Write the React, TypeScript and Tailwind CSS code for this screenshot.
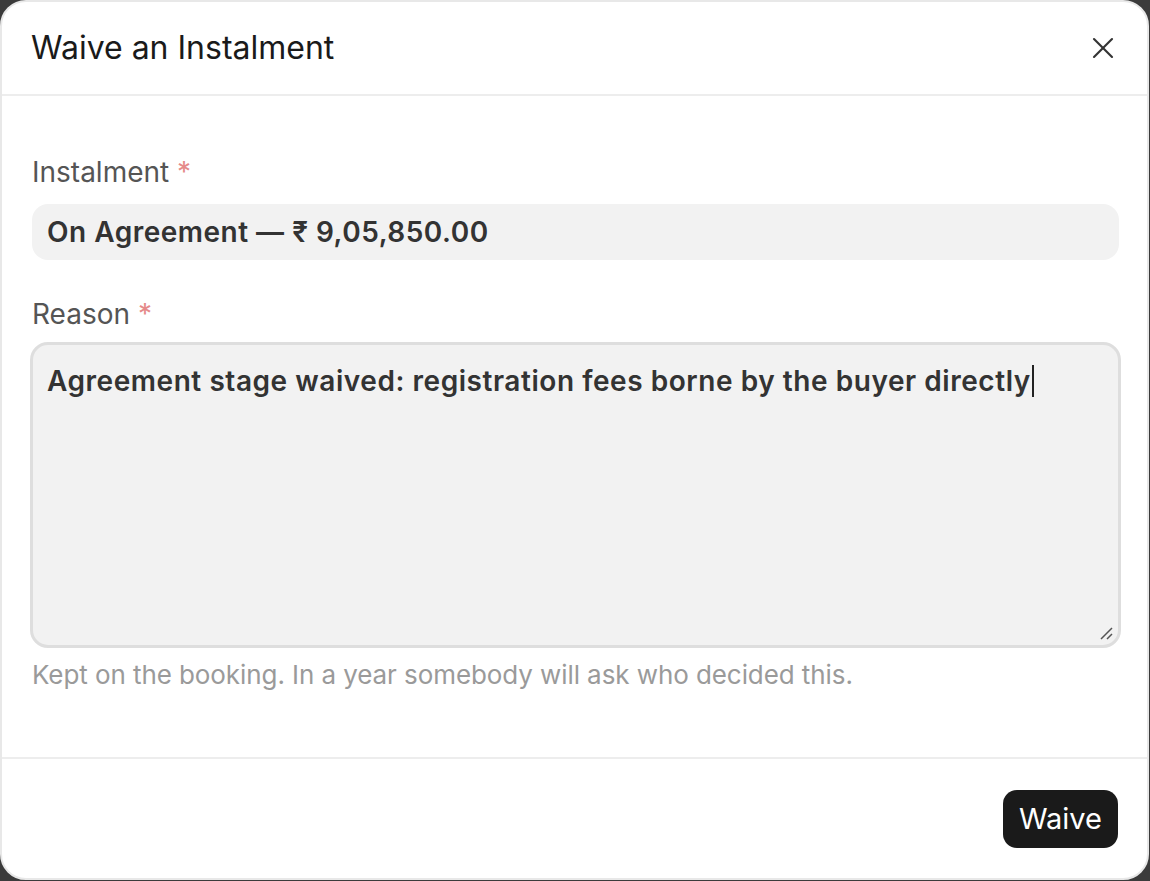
import * as React from "react"
import { X } from "lucide-react"

const font = { fontFamily: "Inter, 'Noto Sans', sans-serif" }

function Field({ label, children }: { label: string; children: React.ReactNode }) {
    return (
        <div className="flex flex-col">
            <label className="text-[28px] leading-[36px] text-[#555555]">
                {label} <span className="text-[#e58a8a]">*</span>
            </label>
            {children}
        </div>
    )
}

export default function App() {
    return (
        <div className="h-[881px] w-[1150px] bg-[#3b3b3b]" style={font}>
            <div className="flex h-[880px] w-[1149px] flex-col rounded-[26px] border-2 border-[#e8e8e8] bg-white">
                {/* header */}
                <div className="flex h-[94px] shrink-0 items-center justify-between border-b-2 border-[#ededed] pl-[29px] pr-[26px]">
                    <h2 className="text-[32px] font-normal text-[#1a1a1a]">Waive an Instalment</h2>
                    <button className="text-[#333333]">
                        <X className="h-[36px] w-[36px]" strokeWidth={1.4} />
                    </button>
                </div>

                {/* body */}
                <div className="flex flex-1 flex-col pl-[30px] pr-[28px] pt-[58px]">
                    <Field label="Instalment">
                        <div className="mt-[14px] flex h-[56px] items-center rounded-[16px] bg-[#f2f2f2] px-[15px] text-[28px] font-semibold tracking-[0.5px] text-[#333333]">
                            On Agreement — ₹ 9,05,850.00
                        </div>
                    </Field>

                    <div className="mt-[36px]">
                        <Field label="Reason">
                            <div className="relative -mx-[2px] mt-[10px] h-[306px] rounded-[18px] border-[3px] border-[#dedede] bg-[#f2f2f2] px-[14px] pt-[14px] text-[28px] font-semibold leading-[38px] tracking-[0.55px] text-[#333333]">
                                Agreement stage waived: registration fees borne by the buyer directly
                                <span className="ml-[1px] inline-block h-[32px] w-[2px] translate-y-[6px] bg-[#222222]" />
                                <svg className="absolute bottom-[4px] right-[4px]" width="16" height="16" viewBox="0 0 16 16">
                                    <path d="M3 14L14 3M9 14L14 9" stroke="#555555" strokeWidth="1.5" fill="none" />
                                </svg>
                            </div>
                        </Field>
                    </div>

                    <p className="mt-[9px] text-[26px] leading-[36px] tracking-[-0.08px] text-[#9a9a9a]">
                        Kept on the booking. In a year somebody will ask who decided this.
                    </p>
                </div>

                {/* footer */}
                <div className="flex h-[121px] shrink-0 items-center justify-end border-t-2 border-[#ededed] pr-[29px]">
                    <button className="h-[58px] rounded-[14px] bg-[#1a1a1a] px-[16px] text-[29px] text-white">
                        Waive
                    </button>
                </div>
            </div>
        </div>
    )
}
